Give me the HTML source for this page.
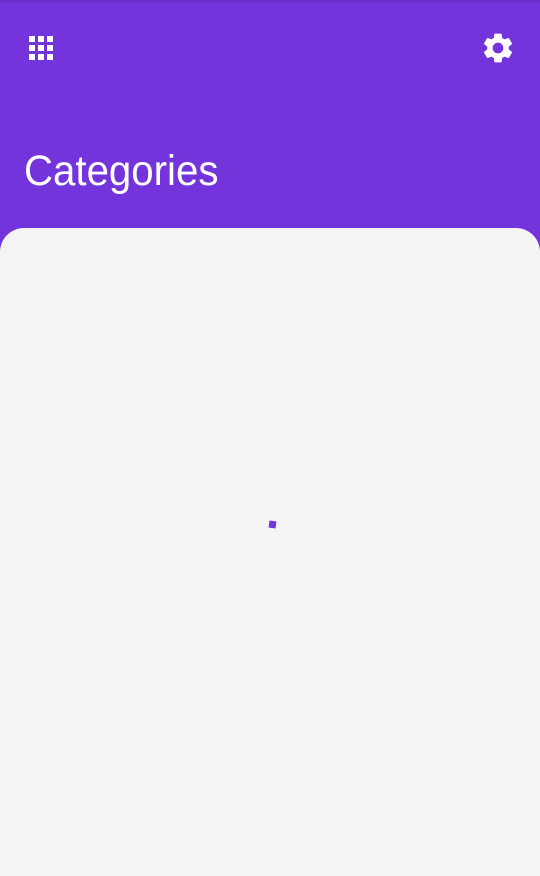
<!DOCTYPE html>
<html><head><meta charset="utf-8"><style>
html,body{margin:0;padding:0;width:540px;height:876px;overflow:hidden;background:#7434db;font-family:"Liberation Sans",sans-serif}
.top{position:absolute;left:0;top:0;width:540px;height:3px;background:#6a2fcc}
.sq{position:absolute;width:6px;height:6px;background:#fff}
.title{position:absolute;left:24px;top:150px;font-size:43px;color:#fff;line-height:1;transform:scaleX(0.935);transform-origin:0 0;white-space:nowrap}
.card{position:absolute;left:0;top:228px;width:540px;height:648px;background:#f4f4f4;border-radius:24px 24px 0 0}
.dot{position:absolute;left:269px;top:521px;width:7px;height:7px;background:#7434db;transform:rotate(8deg)}
</style></head><body>
<div class="top"></div>
<div class="sq" style="left:29px;top:36px"></div><div class="sq" style="left:38px;top:36px"></div><div class="sq" style="left:47px;top:36px"></div>
<div class="sq" style="left:29px;top:45px"></div><div class="sq" style="left:38px;top:45px"></div><div class="sq" style="left:47px;top:45px"></div>
<div class="sq" style="left:29px;top:54px"></div><div class="sq" style="left:38px;top:54px"></div><div class="sq" style="left:47px;top:54px"></div>
<svg style="position:absolute;left:480px;top:30px" width="36" height="36" viewBox="0 0 24 24"><path fill="#fff" d="M19.14 12.94c.04-.3.06-.61.06-.94 0-.32-.02-.64-.07-.94l2.030-1.58c.18-.14.23-.41.12-.61l-1.92-3.32c-.12-.22-.37-.29-.59-.22l-2.39.96c-.5-.38-1.03-.7-1.62-.94l-.36-2.540c-.04-.24-.24-.41-.48-.41h-3.84c-.24 0-.43.17-.47.41l-.36 2.54c-.59.24-1.13.57-1.62.94l-2.39-.96c-.22-.08-.47 0-.59.22L2.74 8.87c-.12.21-.08.47.12.61l2.03 1.58c-.05.3-.09.63-.09.94s.02.64.07.94l-2.03 1.58c-.18.14-.23.41-.12.61l1.92 3.32c.12.22.37.29.59.22l2.39-.96c.5.38 1.03.7 1.62.94l.36 2.54c.05.24.24.41.48.41h3.84c.24 0 .44-.17.47-.41l.36-2.54c.59-.24 1.13-.56 1.62-.94l2.39.96c.22.08.47 0 .59-.22l1.92-3.32c.12-.22.07-.47-.12-.61l-2.01-1.58zM12 15.6c-1.980 0-3.6-1.62-3.6-3.6s1.62-3.6 3.6-3.6 3.6 1.62 3.6 3.6-1.62 3.6-3.6 3.6z"/></svg>
<div class="title">Categories</div>
<div class="card"></div>
<div class="dot"></div>
</body></html>
